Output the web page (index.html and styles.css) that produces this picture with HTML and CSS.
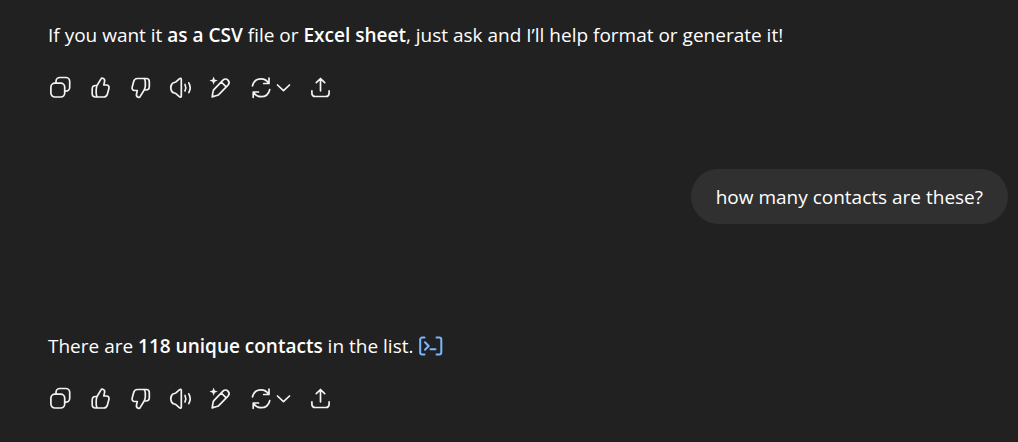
FILE: index.html
```
<!DOCTYPE html>
<html lang="en">
<head>
<meta charset="utf-8">
<meta name="viewport" content="width=device-width, initial-scale=1">
<title>Conversation</title>
<link rel="stylesheet" href="styles.css">
</head>
<body>
<svg class="sprite" aria-hidden="true">
  <symbol id="copy" viewBox="0 0 25 25"><rect x="2.900" y="8.200" width="13.800" height="13.800" rx="4"/><path d="M8 8V6.500a4 4 0 0 1 4-4h5.700a4 4 0 0 1 4 4v5.700a4 4 0 0 1-4 4h-1"/></symbol>
  <symbol id="up" viewBox="0 0 25 25"><path d="M9 10.500l4-6.600c.4-.8 1.200-.9 1.900-.6 1.400.5 2 1.700 1.700 3.100l-.8 3.600h2.700c1.900 0 2.900 1.600 2.400 3.400l-1.500 5.600c-.5 1.900-1.800 3-3.700 3H7.200c-1.900 0-3-1.100-3-3v-5c0-2.100 1.400-3.500 3.400-3.500H9zM9 10.500c-.6 1.500-.8 2.700-.8 4.300v3.700c0 1.400.4 2.600 1.300 3.500"/></symbol>
  <symbol id="down" viewBox="0 0 25 25"><path d="M16.200 15l-4.100 6.600c-.4.8-1.200.9-1.900.6-1.400-.5-2-1.700-1.700-3.100l.8-3.600H6.600c-1.900 0-2.900-1.600-2.400-3.400l1.500-5.600c.5-1.900 1.800-3 3.700-3h8.900c1.900 0 3 1.100 3 3v5c0 2.100-1.400 3.500-3.400 3.500h-1.700zM16.200 15c.8-1.500 1.100-2.700 1.100-4.300V7c0-1.400-.4-2.600-1.300-3.500"/></symbol>
  <symbol id="sound" viewBox="0 0 25 25"><path d="M13.300 4.300v16.900c0 1-.9 1.300-1.700.7l-3.700-3.200c-.5-.4-.9-.6-1.500-.7-1.300-.2-2.200-.8-2.800-2-1.100-2.200-1.100-4.400 0-6.500.6-1.200 1.500-1.800 2.800-2 .6-.1 1-.3 1.500-.7l3.700-3.200c.8-.6 1.700-.3 1.700.7zM17 9.500c1 2.100 1 4.300 0 6.400M20.800 7.800c1.800 3.200 1.800 6.600 0 9.800"/></symbol>
  <symbol id="edit" viewBox="0 0 25 25"><path class="solid" d="M5.600 1.500l1.100 3 3 1.100-3 1.100-1.100 3-1.100-3-3-1.100 3-1.100z"/><path d="M4.200 21.900l.8-5.200c.1-.9.500-1.600 1.100-2.300l8.900-9.200c1.500-1.500 3.500-1.500 4.900-.1s1.500 3.500.1 5l-9 9.200c-.7.700-1.400 1.100-2.300 1.200zM13.300 7l4.900 4.900"/></symbol>
  <symbol id="refresh" viewBox="0 0 25 25"><path d="M3.500 10.800C4.500 6.500 8 3.800 12.100 3.800c3.100 0 5.700 1.500 7.300 3.900M20 3.200v5.300h-5.300M20.700 14.700c-1 4.300-4.500 7-8.600 7-3.100 0-5.700-1.500-7.300-3.900M4.200 22.300V17h5.300"/></symbol>
  <symbol id="chevron" viewBox="0 0 15 15"><path d="M1.500 5l6 5.700L13.500 5"/></symbol>
  <symbol id="share" viewBox="0 0 25 25"><path d="M12.500 15.800V3.500M8.300 7.700l4.200-4.200 4.200 4.200M3.900 15.800v2.400c0 2 1.300 3.300 3.300 3.300h10.600c2 0 3.300-1.300 3.300-3.300v-2.400"/></symbol>
</svg>
<main class="chat">
  <article class="answer">
    <p>If you want it <strong>as a CSV</strong> file or <strong>Excel sheet</strong>, just ask and I’ll help format or generate it!</p>
    <div class="actions">
      <button aria-label="Copy"><svg><use href="#copy"/></svg></button>
      <button aria-label="Good response"><svg><use href="#up"/></svg></button>
      <button aria-label="Bad response"><svg><use href="#down"/></svg></button>
      <button aria-label="Read aloud"><svg><use href="#sound"/></svg></button>
      <button aria-label="Edit"><svg><use href="#edit"/></svg></button>
      <button class="retry" aria-label="Try again"><svg><use href="#refresh"/></svg><svg class="small"><use href="#chevron"/></svg></button>
      <button aria-label="Share"><svg><use href="#share"/></svg></button>
    </div>
  </article>
  <p class="question">how many contacts are these?</p>
  <article class="answer">
    <p>There are <strong>118 unique contacts</strong> in the list. <button class="code" aria-label="View analysis"><svg viewBox="0 0 25 20"><path d="M6.500 1.500H4.200a2 2 0 0 0-2 2v13a2 2 0 0 0 2 2h2.300M18.500 1.500h2.800a2 2 0 0 1 2 2v13a2 2 0 0 1-2 2h-2.800M7 6.300l3.700 3.700L7 13.700M12.500 13.300h5"/></svg></button></p>
    <div class="actions">
      <button aria-label="Copy"><svg><use href="#copy"/></svg></button>
      <button aria-label="Good response"><svg><use href="#up"/></svg></button>
      <button aria-label="Bad response"><svg><use href="#down"/></svg></button>
      <button aria-label="Read aloud"><svg><use href="#sound"/></svg></button>
      <button aria-label="Edit"><svg><use href="#edit"/></svg></button>
      <button class="retry" aria-label="Try again"><svg><use href="#refresh"/></svg><svg class="small"><use href="#chevron"/></svg></button>
      <button aria-label="Share"><svg><use href="#share"/></svg></button>
    </div>
  </article>
</main>
</body>
</html>
```
FILE: styles.css
```
* { box-sizing: border-box; }
body {
  margin: 0;
  background: #212121;
  color: #fff;
  font: 19px/35px "Segoe UI", "Open Sans", "Noto Sans", sans-serif;
}
p { margin: 0; }
strong { font-weight: 600; }
.sprite { display: none; }
.chat {
  display: flex;
  flex-direction: column;
  padding: 18px 10px 0 48px;
}
.actions {
  display: flex;
  margin: 14px 0 0 -8px;
}
button {
  display: flex;
  align-items: center;
  justify-content: center;
  width: 40px;
  height: 40px;
  padding: 0;
  border: 0;
  border-radius: 10px;
  background: none;
  color: #f3f3f3;
}
svg {
  width: 25px;
  height: 25px;
  fill: none;
  stroke: currentColor;
  stroke-width: 1.7;
  stroke-linecap: round;
  stroke-linejoin: round;
}
.solid { fill: currentColor; stroke: none; }
.retry { width: 60px; }
.small { width: 15px; height: 15px; margin-left: 2px; }
.question {
  align-self: flex-end;
  margin: 62px 0 105px;
  padding: 11px 25px 9px;
  border-radius: 28px;
  background: #303030;
}
.code {
  display: inline-flex;
  width: 25px;
  height: 20px;
  vertical-align: -3px;
  color: #7ab7ff;
}
.code svg { height: 20px; stroke-width: 2; }
```
